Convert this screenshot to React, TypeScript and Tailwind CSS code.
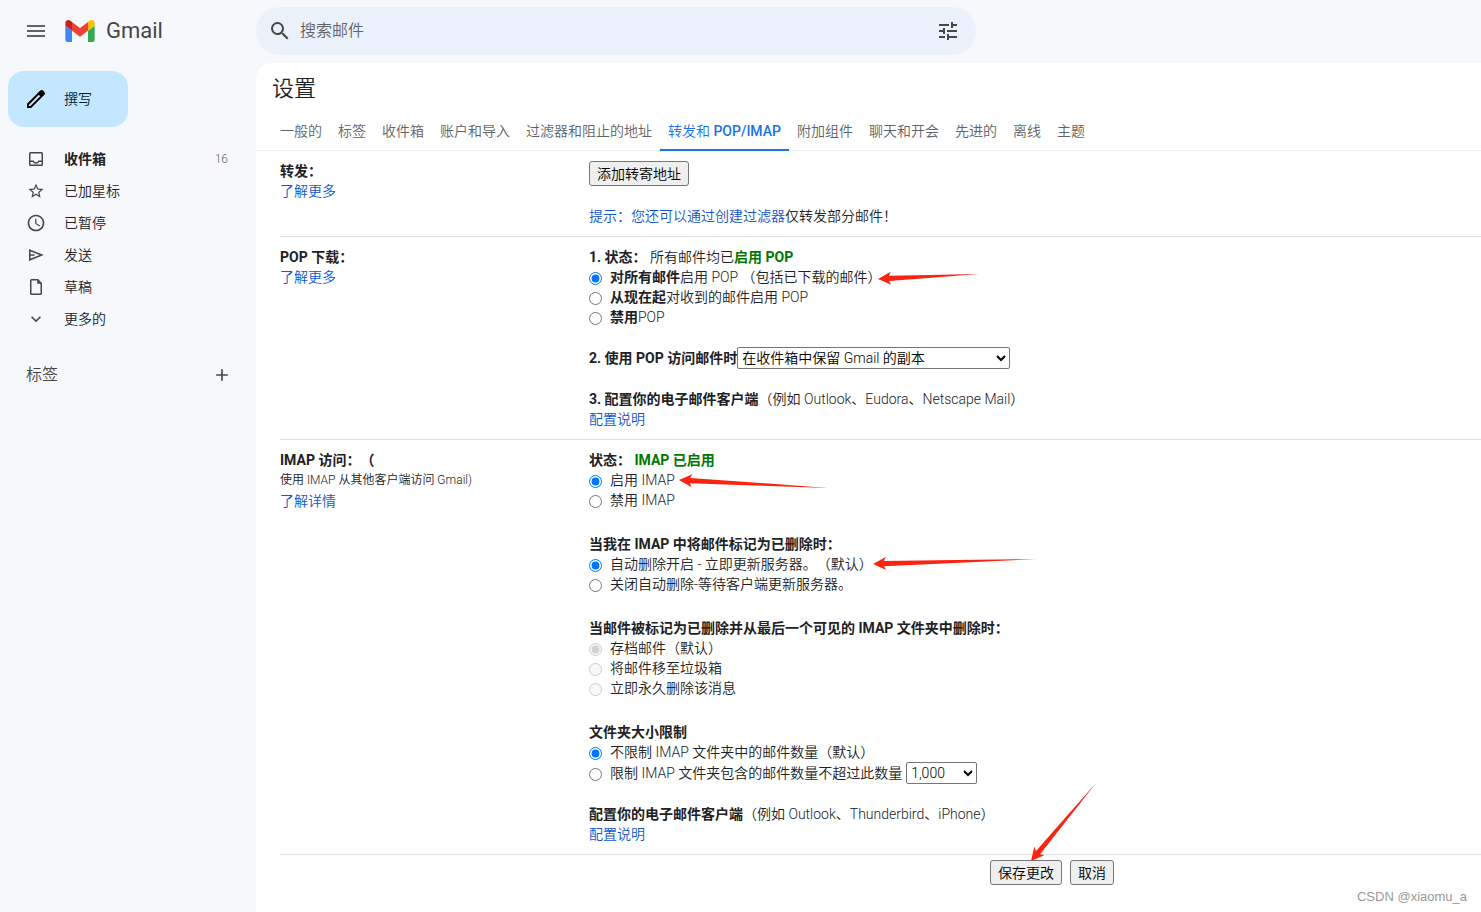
import type { ReactNode } from "react";
import { MdMenu, MdSearch, MdTune, MdStarBorder, MdSchedule, MdKeyboardArrowDown, MdAdd } from "react-icons/md";

const tabs: { id: string; label: ReactNode; active?: boolean }[] = [
  { id: "general", label: "一般的" },
  { id: "labels", label: "标签" },
  { id: "inbox", label: "收件箱" },
  { id: "accounts", label: "账户和导入" },
  { id: "filters", label: "过滤器和阻止的地址" },
  {
    id: "forwarding",
    label: (
      <>
        转发和 <span className="font-medium">POP/IMAP</span>
      </>
    ),
    active: true,
  },
  { id: "addons", label: "附加组件" },
  { id: "chat", label: "聊天和开会" },
  { id: "advanced", label: "先进的" },
  { id: "offline", label: "离线" },
  { id: "themes", label: "主题" },
];

function GmailLogo() {
  return (
    <svg viewBox="52 42 88 66" className="h-[22px] w-[30px]" aria-hidden="true">
      <path fill="#4285f4" d="M58 108h14V74L52 59v43c0 3.32 2.69 6 6 6" />
      <path fill="#34a853" d="M120 108h14c3.32 0 6-2.69 6-6V59l-20 15" />
      <path fill="#fbbc04" d="M120 48v26l20-15v-8c0-7.42-8.47-11.65-14.4-7.2" />
      <path fill="#ea4335" d="M72 74V48l24 18 24-18v26L96 92" />
      <path fill="#c5221f" d="M52 51v8l20 15V48l-5.6-4.2c-5.94-4.45-14.4-.22-14.4 7.2" />
    </svg>
  );
}

function PencilIcon() {
  return (
    <svg viewBox="0 0 24 24" className="size-6" aria-hidden="true">
      <path
        fill="#000"
        fillRule="evenodd"
        d="M20.41 4.94l-1.35-1.35c-.78-.78-2.05-.78-2.83 0L3 16.82V21h4.18L20.41 7.77c.79-.78.79-2.05 0-2.83zM6.41 19.06L5 19v-1.36l9.82-9.82 1.41 1.41z"
      />
    </svg>
  );
}

function InboxIcon() {
  return (
    <svg viewBox="0 0 20 20" className="size-5" fill="none" stroke="currentColor" strokeWidth="1.5" aria-hidden="true">
      <rect x="3.75" y="3.75" width="12.5" height="12.5" rx="0.8" />
      <path d="M4 12.25h3.2c.5 1.1 1.5 1.8 2.8 1.8s2.3-.7 2.8-1.8H16" />
    </svg>
  );
}

function SendIcon() {
  return (
    <svg viewBox="0 0 20 20" className="size-5" fill="none" stroke="currentColor" strokeWidth="1.5" aria-hidden="true">
      <path d="M3.75 5.2L15.8 10L3.75 14.8V5.2z" />
      <path d="M4 10h4.5" />
    </svg>
  );
}

function DraftIcon() {
  return (
    <svg viewBox="0 0 20 20" className="size-5" fill="none" stroke="currentColor" strokeWidth="1.5" aria-hidden="true">
      <path d="M5.55 2.75h6.2l3.5 3.5v10.2c0 .45-.35.8-.8.8h-8.9c-.45 0-.8-.35-.8-.8V3.55c0-.45.35-.8.8-.8z" />
      <path d="M11.25 2.5v4.25h4.25z" fill="currentColor" stroke="none" />
    </svg>
  );
}

const folders: { label: string; icon: ReactNode; count?: string }[] = [
  { label: "收件箱", icon: <InboxIcon />, count: "16" },
  { label: "已加星标", icon: <MdStarBorder className="size-[18px]" /> },
  { label: "已暂停", icon: <MdSchedule className="size-5" /> },
  { label: "发送", icon: <SendIcon /> },
  { label: "草稿", icon: <DraftIcon /> },
  { label: "更多的", icon: <MdKeyboardArrowDown className="size-5" /> },
];

/* Tapered arrow whose tip sits at the svg origin; dx/dy lead to its tail. */
function Arrow({ dx, dy, className }: { dx: number; dy: number; className: string }) {
  const length = Math.hypot(dx, dy);
  const angle = (Math.atan2(dy, dx) * 180) / Math.PI;
  return (
    <svg width="1" height="1" className={`pointer-events-none absolute overflow-visible ${className}`} aria-hidden="true">
      <polygon
        fill="#fb2412"
        transform={`rotate(${angle})`}
        points={`0,0 13,-6.5 11,-2.6 ${length * 0.5},-1.5 ${length},0 ${length * 0.5},1.5 11,2.6 13,6.5`}
      />
    </svg>
  );
}

function Radio(props: { name: string; checked?: boolean; disabled?: boolean; children: ReactNode }) {
  return (
    <label className="flex h-5 items-center gap-2">
      <input
        type="radio"
        name={props.name}
        defaultChecked={props.checked}
        disabled={props.disabled}
        className="mt-[3px] size-[13px] shrink-0"
      />
      <span className="relative whitespace-nowrap">{props.children}</span>
    </label>
  );
}

function Section({ side, children }: { side: ReactNode; children: ReactNode }) {
  return (
    <section className="grid grid-cols-[309px_1fr] border-b border-[#e0e0e0] py-2.5">
      <div>{side}</div>
      <div className="flex flex-col items-start">{children}</div>
    </section>
  );
}

function Link({ children }: { children: ReactNode }) {
  return (
    <a href="#" className="text-[#1155cc]">
      {children}
    </a>
  );
}

const buttonClass =
  "relative h-[25px] rounded-[3px] border border-[#767676] bg-[#efefef] px-[7px] whitespace-nowrap text-black";
const selectClass = "h-[22px] rounded-[2px] border border-[#767676] bg-white text-black";

export default function App() {
  return (
    <div className="relative flex min-h-screen flex-col bg-[#f6f8fc] font-[Roboto,'Noto_Sans_CJK_SC',sans-serif] text-sm leading-5 [font-weight:350] text-[#202124] [text-spacing-trim:space-all]">
      <header className="flex h-[63px] pb-px">
        <div className="flex w-64 shrink-0 items-center pl-6">
          <button aria-label="主菜单" className="text-[#5f6368]">
            <MdMenu className="size-6" />
          </button>
          <a href="#" className="ml-[17px] flex items-center gap-[11px]">
            <GmailLogo />
            <span className="text-[22px] leading-6 font-normal text-[#444746]">Gmail</span>
          </a>
        </div>
        <form role="search" className="mt-[7px] flex h-12 w-full max-w-[720px] items-center rounded-full bg-[#eaf1fb] pr-4 pl-3">
          <button type="button" aria-label="搜索" className="text-[#444746]">
            <MdSearch className="size-6" />
          </button>
          <input
            type="text"
            aria-label="搜索邮件"
            placeholder="搜索邮件"
            className="ml-2 min-w-0 flex-1 bg-transparent text-base outline-none placeholder:text-[#5f6368]"
          />
          <button type="button" aria-label="显示搜索选项" className="text-[#444746]">
            <MdTune className="size-6" />
          </button>
        </form>
      </header>

      <div className="flex flex-1">
        <aside className="w-64 shrink-0 pt-2">
          <button className="ml-2 flex h-14 w-[120px] items-center gap-4 rounded-2xl bg-[#c2e7ff] pl-4 text-[#001d35]">
            <PencilIcon />
            撰写
          </button>
          <ul className="mt-4">
            {folders.map((f) => (
              <li key={f.label}>
                <a href="#" className="flex h-8 items-center pr-7 pl-[26px]">
                  <span className="flex w-5 justify-center text-[#444746]">{f.icon}</span>
                  <span className={f.count ? "ml-[18px] flex-1 font-bold" : "ml-[18px] flex-1"}>{f.label}</span>
                  {f.count && <span className="text-xs text-[#5f6368]">{f.count}</span>}
                </a>
              </li>
            ))}
          </ul>
          <div className="mt-4 flex h-12 items-center justify-between pr-6 pl-[26px]">
            <h2 className="text-base [font-weight:350] text-[#444746]">标签</h2>
            <button aria-label="创建新标签" className="text-[#444746]">
              <MdAdd className="size-5" />
            </button>
          </div>
        </aside>

        <main className="min-w-0 flex-1 rounded-tl-2xl bg-white">
          <h1 className="px-4 pt-3 text-[22px] leading-7 [font-weight:350]">设置</h1>
          <nav className="mt-2 flex h-10 border-b border-[#eceff1] pl-4">
            {tabs.map((t) => (
              <a
                key={t.id}
                href="#"
                className={
                  t.active
                    ? "-mb-px h-10 border-b-2 border-[#1a73e8] px-2 pt-2.5 whitespace-nowrap text-[#1a73e8]"
                    : "px-2 pt-2.5 whitespace-nowrap text-[#5f6368]"
                }
              >
                {t.label}
              </a>
            ))}
          </nav>

          <div className="pl-6">
            <Section
              side={
                <>
                  <p className="font-bold">转发：</p>
                  <Link>了解更多</Link>
                </>
              }
            >
              <button className={buttonClass}>添加转寄地址</button>
              <p className="mt-5">
                <Link>提示：您还可以通过创建过滤器</Link>仅转发部分邮件！
              </p>
            </Section>

            <Section
              side={
                <>
                  <p className="font-bold">POP 下载：</p>
                  <Link>了解更多</Link>
                </>
              }
            >
              <p>
                <b className="font-bold">1. 状态：</b> 所有邮件均已<b className="font-bold text-[#007700]">启用 POP</b>
              </p>
              <Radio name="pop" checked>
                <b className="font-bold">对所有邮件</b>启用 POP （包括已下载的邮件）
                <Arrow dx={101} dy={-5} className="top-3 left-full -ml-1" />
              </Radio>
              <Radio name="pop">
                <b className="font-bold">从现在起</b>对收到的邮件启用 POP
              </Radio>
              <Radio name="pop">
                <b className="font-bold">禁用</b>POP
              </Radio>
              <div className="mt-5 flex items-center">
                <label htmlFor="pop-action" className="font-bold">
                  2. 使用 POP 访问邮件时
                </label>
                <select id="pop-action" className={`w-[273px] ${selectClass}`}>
                  <option>在收件箱中保留 Gmail 的副本</option>
                </select>
              </div>
              <p className="mt-5">
                <b className="font-bold">3. 配置你的电子邮件客户端</b>（例如 Outlook、Eudora、Netscape Mail）
              </p>
              <Link>配置说明</Link>
            </Section>

            <Section
              side={
                <>
                  <p className="font-bold">IMAP 访问：（</p>
                  <p className="text-xs leading-[21px]">使用 IMAP 从其他客户端访问 Gmail)</p>
                  <Link>了解详情</Link>
                </>
              }
            >
              <p className="font-bold">
                状态： <span className="text-[#007700]">IMAP 已启用</span>
              </p>
              <Radio name="imap" checked>
                启用 IMAP
                <Arrow dx={149} dy={8} className="top-2.5 left-full ml-1" />
              </Radio>
              <Radio name="imap">禁用 IMAP</Radio>

              <p className="mt-6 font-bold">当我在 IMAP 中将邮件标记为已删除时：</p>
              <Radio name="expunge" checked>
                自动删除开启 - 立即更新服务器。（默认）
                <Arrow dx={163} dy={-5} className="top-2.5 left-full" />
              </Radio>
              <Radio name="expunge">关闭自动删除-等待客户端更新服务器。</Radio>

              <p className="mt-6 font-bold">当邮件被标记为已删除并从最后一个可见的 IMAP 文件夹中删除时：</p>
              <Radio name="removed" checked disabled>
                存档邮件（默认）
              </Radio>
              <Radio name="removed" disabled>
                将邮件移至垃圾箱
              </Radio>
              <Radio name="removed" disabled>
                立即永久删除该消息
              </Radio>

              <p className="mt-6 font-bold">文件夹大小限制</p>
              <Radio name="limit" checked>
                不限制 IMAP 文件夹中的邮件数量（默认）
              </Radio>
              <div className="flex items-center gap-1">
                <Radio name="limit">限制 IMAP 文件夹包含的邮件数量不超过此数量</Radio>
                <select aria-label="邮件数量上限" className={`w-[71px] ${selectClass}`}>
                  <option>1,000</option>
                </select>
              </div>

              <p className="mt-5">
                <b className="font-bold">配置你的电子邮件客户端</b>（例如 Outlook、Thunderbird、iPhone）
              </p>
              <Link>配置说明</Link>
            </Section>

            <div className="flex gap-2 pt-[5px] pl-[710px]">
              <button className={buttonClass}>
                保存更改
                <Arrow dx={65} dy={-78} className="top-0 left-10" />
              </button>
              <button className={buttonClass}>取消</button>
            </div>
          </div>
        </main>
      </div>

      <p className="pointer-events-none absolute right-[14px] bottom-[5px] font-['Liberation_Sans',sans-serif] text-[13px] font-normal text-[#999999]">
        CSDN @xiaomu_a
      </p>
    </div>
  );
}
